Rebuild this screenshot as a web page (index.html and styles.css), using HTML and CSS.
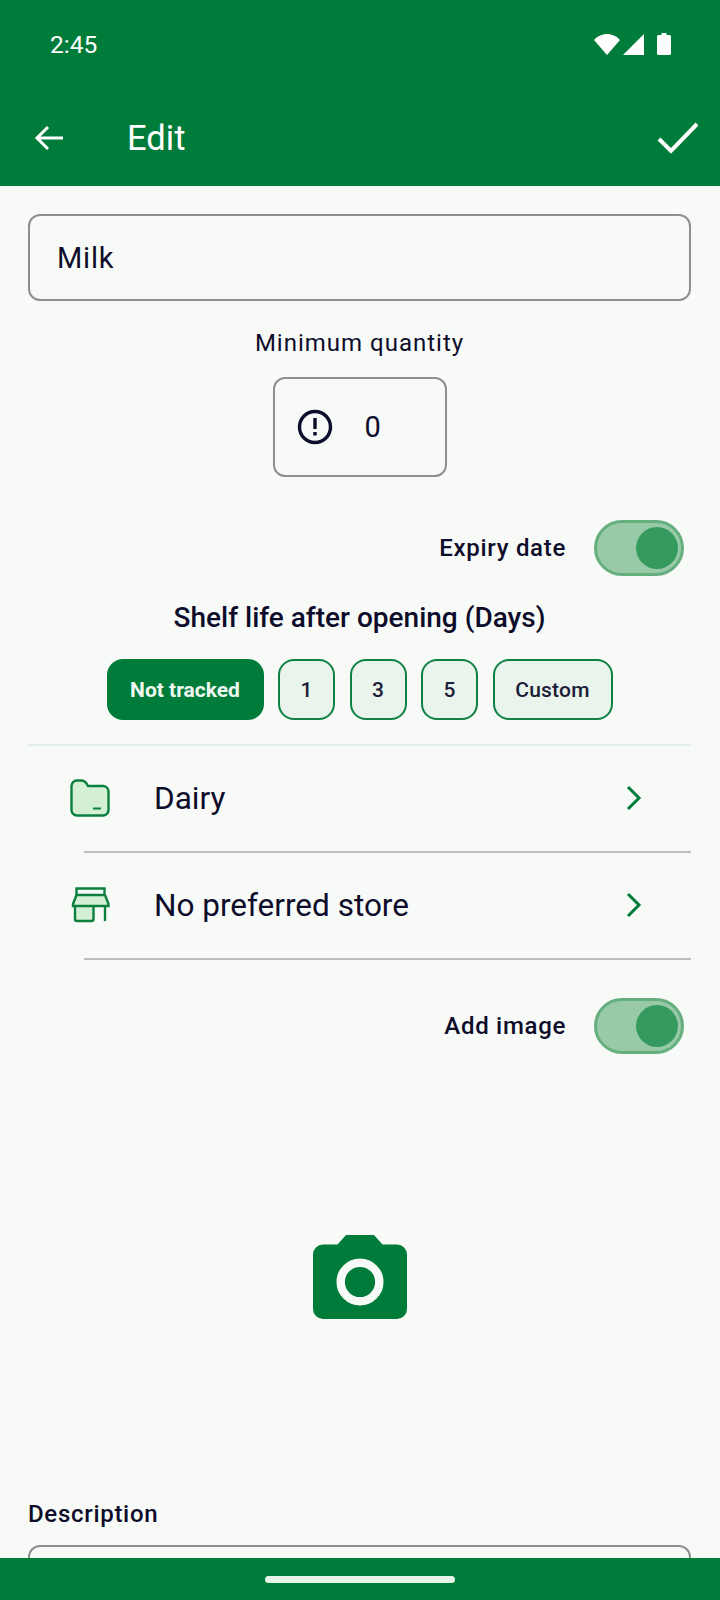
FILE: index.html
```html
<!DOCTYPE html>
<html lang="en">
<head>
    <meta charset="UTF-8">
    <meta name="viewport" content="width=device-width, initial-scale=1.0">
    <title>Edit</title>
    <link rel="stylesheet" href="styles.css">
</head>
<body>
    <div class="screen">
        <header class="top">
            <div class="status">
                <span class="time">2:45</span>
                <div class="status-icons">
                    <svg width="26" height="21" viewBox="0 0 26 21"><path d="M0 6C3 2.500 8 0 13 0s10 2.500 13 6L13 21z" fill="#fff"/></svg>
                    <svg width="21" height="21" viewBox="0 0 21 21"><path d="M21 0v21H0z" fill="#fff"/></svg>
                    <svg class="battery" width="14" height="22" viewBox="0 0 14 22"><path d="M4.500 0h5v2H12.500a1.500 1.500 0 0 1 1.500 1.500v17a1.500 1.500 0 0 1-1.500 1.500h-11A1.500 1.500 0 0 1 0 20.500v-17A1.500 1.500 0 0 1 1.500 2h3z" fill="#fff"/></svg>
                </div>
            </div>
            <div class="toolbar">
                <svg class="back" width="30" height="26" viewBox="0 0 30 26"><path d="M29 13H3M14 2 3 13l11 11" fill="none" stroke="#fff" stroke-width="3"/></svg>
                <span class="title">Edit</span>
                <svg class="done" width="42" height="32" viewBox="0 0 42 32"><path d="M2 17l12 12L40 2" fill="none" stroke="#fff" stroke-width="4"/></svg>
            </div>
        </header>

        <main class="content">
            <div class="name-field">Milk</div>

            <div class="min-label">Minimum quantity</div>
            <div class="min-box">
                <svg width="36" height="36" viewBox="0 0 36 36"><circle cx="18" cy="18" r="15.500" fill="none" stroke="#0e0c2b" stroke-width="3.400"/><path d="M16.300 9h3.400v11h-3.400zM16.300 23h3.400v3.500h-3.400z" fill="#0e0c2b"/></svg>
                <span class="min-value">0</span>
            </div>

            <div class="switch-row expiry">
                <span class="switch-label">Expiry date</span>
                <div class="switch"><div class="thumb"></div></div>
            </div>

            <div class="shelf-title">Shelf life after opening (Days)</div>
            <div class="chips">
                <div class="chip selected">Not tracked</div>
                <div class="chip num">1</div>
                <div class="chip num">3</div>
                <div class="chip num">5</div>
                <div class="chip custom">Custom</div>
            </div>
            <div class="divider"></div>

            <div class="row">
                <svg class="row-icon" width="40" height="38" viewBox="0 0 40 38"><path d="M1.500 7A5.500 5.500 0 0 1 7 1.500h4.500c2.500 0 4 1.500 5 3l1.500 2.500h15.500a5.500 5.500 0 0 1 5 5.500V31a5.500 5.500 0 0 1-5.500 5.500H7A5.500 5.500 0 0 1 1.500 31z" fill="#d3efd4" stroke="#0b7f3e" stroke-width="2.400"/><path d="M23 29.500h8" stroke="#0b7f3e" stroke-width="2"/></svg>
                <span class="row-text">Dairy</span>
                <svg class="chevron" width="16" height="26" viewBox="0 0 16 26"><path d="M2 2l11 11L2 24" fill="none" stroke="#007c3a" stroke-width="3"/></svg>
            </div>
            <div class="row-line"></div>
            <div class="row">
                <svg class="row-icon" width="40" height="36" viewBox="0 0 40 36"><path d="M5 19h18.500v13a2 2 0 0 1-2 2H7a2 2 0 0 1-2-2z" fill="#d3efd4"/><path d="M6 8h29l3.500 9v2H3v-2z" fill="#d3efd4"/><path d="M6.500 1.500h28V8h-28zM6.500 8 3 17v2h35.500v-2L35 8M5 19v13a2 2 0 0 0 2 2h14.500a2 2 0 0 0 2-2V19M35 19v15" fill="none" stroke="#0b7f3e" stroke-width="2.400"/></svg>
                <span class="row-text">No preferred store</span>
                <svg class="chevron" width="16" height="26" viewBox="0 0 16 26"><path d="M2 2l11 11L2 24" fill="none" stroke="#007c3a" stroke-width="3"/></svg>
            </div>
            <div class="row-line"></div>

            <div class="switch-row image">
                <span class="switch-label">Add image</span>
                <div class="switch"><div class="thumb"></div></div>
            </div>

            <div class="camera">
                <svg width="94" height="84" viewBox="0 0 94 84"><path d="M10 9.500h14.500L33 0h28l8.500 9.500H84a10 10 0 0 1 10 10V74a10 10 0 0 1-10 10H10A10 10 0 0 1 0 74V19.500a10 10 0 0 1 10-10z" fill="#007c3a"/><circle cx="47" cy="47" r="19.300" fill="none" stroke="#f7faf7" stroke-width="8.400"/></svg>
            </div>

            <div class="desc-label">Description</div>
            <div class="desc-box"></div>
        </main>

        <div class="nav-bar"><div class="pill"></div></div>
    </div>
</body>
</html>
```

FILE: styles.css
```css
body {
    margin: 0;
    background-color: #f7faf7;
    font-family: Roboto, "Noto Sans", sans-serif;
    color: #0e0c2b;
}

.screen {
    position: relative;
    width: 720px;
    height: 1600px;
    overflow: hidden;
}

.top {
    background-color: #007c3a;
    color: #fff;
    height: 186px;
}

.status {
    display: flex;
    justify-content: space-between;
    align-items: center;
    height: 88px;
    padding: 0 49px 0 50px;
}

.time {
    font-size: 24.500px;
}

.status-icons {
    display: flex;
    align-items: center;
    gap: 3px;
}

.battery {
    margin-left: 10px;
}

.toolbar {
    display: flex;
    align-items: center;
    height: 96px;
    padding: 2px 21px 0 34px;
}

.title {
    font-size: 34.500px;
    margin-left: 63px;
    flex: 1;
}

.content {
    padding: 28px 29px 0 28px;
}

.name-field {
    height: 83px;
    border: 2px solid #8d908e;
    border-radius: 12px;
    padding-left: 27px;
    display: flex;
    align-items: center;
    font-size: 29px;
    letter-spacing: 0.8px;
}

.min-label {
    margin-top: 27px;
    text-align: center;
    font-size: 24px;
    letter-spacing: 1px;
    line-height: 30px;
}

.min-box {
    box-sizing: border-box;
    width: 174px;
    height: 100px;
    margin: 19px auto 0;
    border: 2px solid #8d908e;
    border-radius: 12px;
    display: flex;
    align-items: center;
    padding-left: 22px;
}

.min-value {
    font-size: 29px;
    margin-left: 32px;
}

.switch-row {
    display: flex;
    justify-content: flex-end;
    align-items: center;
    gap: 28px;
    padding-right: 7px;
}

.expiry {
    margin-top: 43px;
}

.image {
    margin-top: 38px;
}

.switch-label {
    font-size: 24px;
    font-weight: 500;
    letter-spacing: 0.7px;
}

.switch {
    box-sizing: border-box;
    width: 90px;
    height: 56px;
    border: 3px solid #65af7f;
    border-radius: 28px;
    background-color: #98caa8;
    display: flex;
    justify-content: flex-end;
    align-items: center;
    padding-right: 3px;
}

.thumb {
    width: 42px;
    height: 42px;
    border-radius: 50%;
    background-color: #359a5e;
}

.shelf-title {
    margin-top: 25px;
    text-align: center;
    font-size: 28px;
    font-weight: 500;
    line-height: 34px;
}

.chips {
    display: flex;
    justify-content: center;
    gap: 14.500px;
    margin-top: 24px;
}

.chip {
    box-sizing: border-box;
    height: 61px;
    display: flex;
    justify-content: center;
    align-items: center;
    border: 2px solid #0f8145;
    border-radius: 16px;
    background-color: #e9f4ec;
    font-size: 21px;
    font-weight: 500;
    letter-spacing: 0.2px;
    color: #1c1c38;
}

.selected {
    width: 157px;
    background-color: #007c3a;
    border-color: #007c3a;
    color: #f0f8f2;
    font-weight: 700;
    letter-spacing: 0;
}

.num {
    width: 57px;
}

.custom {
    width: 120px;
}

.divider {
    height: 2px;
    background-color: #dfeee7;
    margin-top: 24px;
}

.row {
    display: flex;
    align-items: center;
    height: 104.750px;
    padding-left: 42px;
}

.row-icon {
    flex: none;
}

.row-text {
    flex: 1;
    margin-left: 44px;
    font-size: 31.500px;
}

.chevron {
    margin-right: 49px;
}

.row-line {
    height: 2px;
    margin-left: 56px;
    background-color: #bdbdbd;
}

.camera {
    display: flex;
    justify-content: center;
    margin-top: 181px;
}

.desc-label {
    margin-top: 180px;
    font-size: 24px;
    font-weight: 500;
    letter-spacing: 0.7px;
    line-height: 30px;
}

.desc-box {
    height: 100px;
    margin-top: 16px;
    border: 2px solid #8d908e;
    border-radius: 12px;
}

.nav-bar {
    position: absolute;
    left: 0;
    right: 0;
    bottom: 0;
    height: 42px;
    background-color: #007c3a;
}

.pill {
    width: 190px;
    height: 7px;
    margin: 18px auto 0;
    border-radius: 4px;
    background-color: #e6f4ea;
}
```
